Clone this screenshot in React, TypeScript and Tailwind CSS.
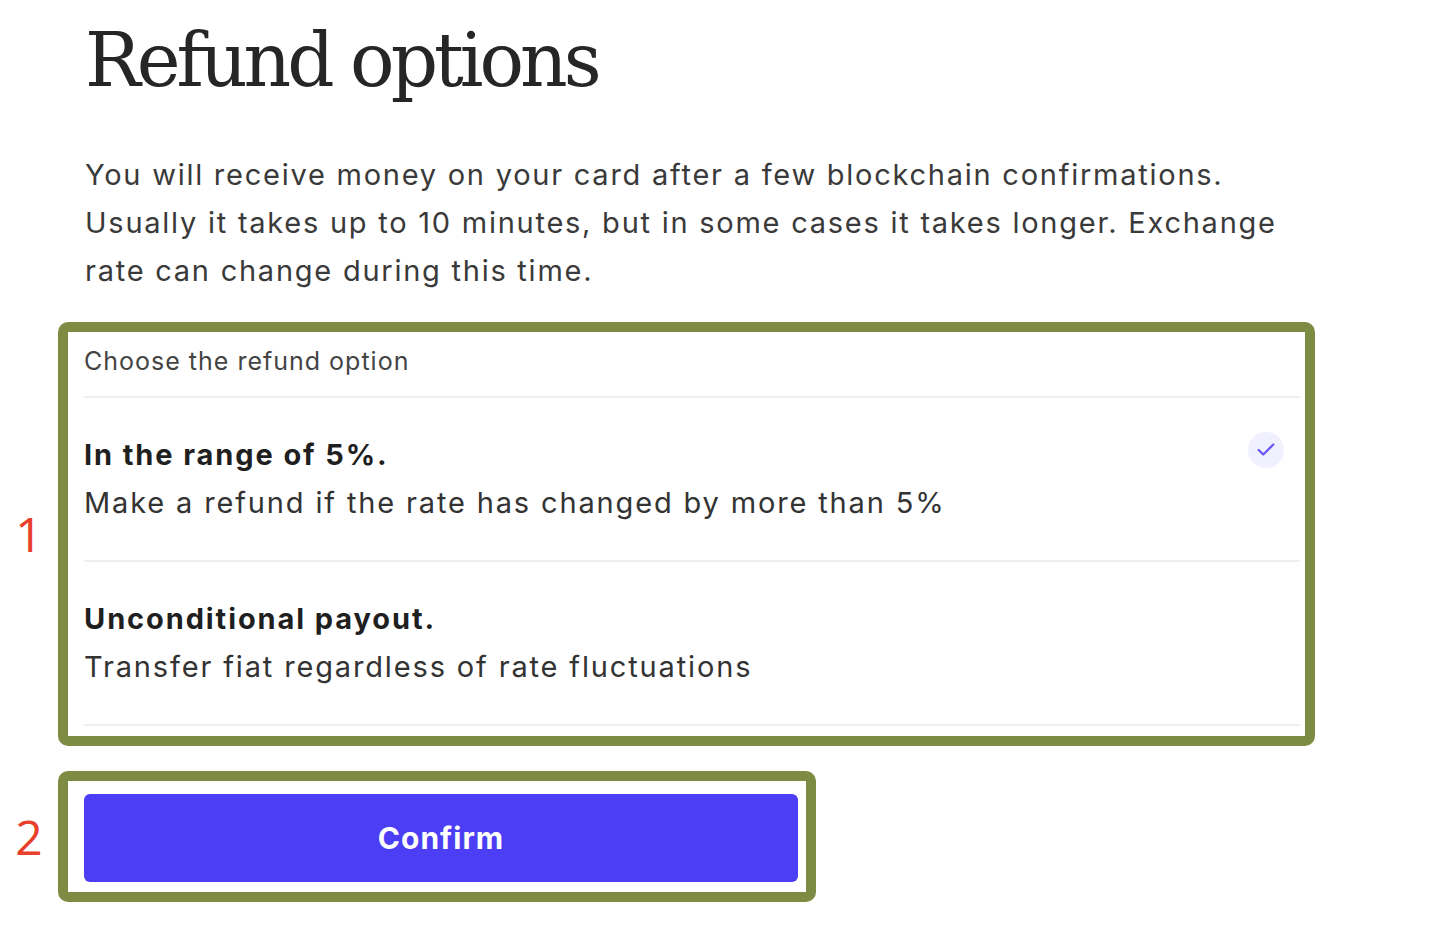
import { Check } from "lucide-react";

const options = [
  {
    title: "In the range of 5%.",
    text: "Make a refund if the rate has changed by more than 5%",
    selected: true,
  },
  {
    title: "Unconditional payout.",
    text: "Transfer fiat regardless of rate fluctuations",
    selected: false,
  },
];

export default function App() {
  return (
    <div className="w-[1431px] h-[927px] bg-white overflow-hidden font-['Inter',sans-serif] text-[#2d2d2d]">
      {/* Heading + intro */}
      <div className="pl-[85px] pt-[14px]">
        <h1 className="font-['DejaVu_Serif',serif] text-[74px] leading-[92px] tracking-[-4px] text-[#262626]">
          Refund options
        </h1>
        <p className="mt-[45px] w-[1232px] text-[29px] leading-[48px] tracking-[1.75px] text-[#3a3a3a]">
          You will receive money on your card after a few blockchain confirmations. Usually it takes up to 10
          minutes, but in some cases it takes longer. Exchange rate can change during this time.
        </p>
      </div>

      {/* Block 1 - options */}
      <div className="mt-[27px] flex items-center">
        <div className="w-[58px] text-center text-[48px] leading-none text-[#e8402a] font-['Open_Sans',sans-serif]">1</div>
        <div className="w-[1257px] border-[10px] border-[#7d8c42] rounded-[10px] pl-4 pr-[5px] pb-[10px]">
          <div className="pt-[11px] pb-[17px] text-[25px] leading-[36px] tracking-[1px] text-[#444]">Choose the refund option</div>
          <div className="h-[2px] bg-[#efefef]" />
          {options.map((o) => (
            <div key={o.title}>
              <div className="flex items-start justify-between pt-[33px] pb-[33px]">
                <div>
                  <div className="text-[29px] leading-[48px] font-bold tracking-[1.9px] text-[#1f1f1f]">{o.title}</div>
                  <div className="text-[29px] leading-[48px] tracking-[1.85px] text-[#333]">{o.text}</div>
                </div>
                {o.selected && (
                  <div className="mt-[1px] mr-4 w-9 h-9 rounded-full bg-[#f1f0fe] flex items-center justify-center">
                    <Check className="w-[22px] h-[22px] text-[#6558f5]" strokeWidth={2.4} />
                  </div>
                )}
              </div>
              <div className="h-[2px] bg-[#efefef]" />
            </div>
          ))}
        </div>
      </div>

      {/* Block 2 - confirm */}
      <div className="mt-[25px] flex items-center">
        <div className="w-[58px] text-center text-[48px] leading-none text-[#e8402a] font-['Open_Sans',sans-serif]">2</div>
        <div className="w-[758px] border-[10px] border-[#7d8c42] rounded-[10px] pl-4 pr-2 pt-[13px] pb-[10px]">
          <button className="w-full h-[88px] rounded-md bg-[#4b3ef5] text-white text-[30px] font-bold tracking-[1px]">
            Confirm
          </button>
        </div>
      </div>
    </div>
  );
}
